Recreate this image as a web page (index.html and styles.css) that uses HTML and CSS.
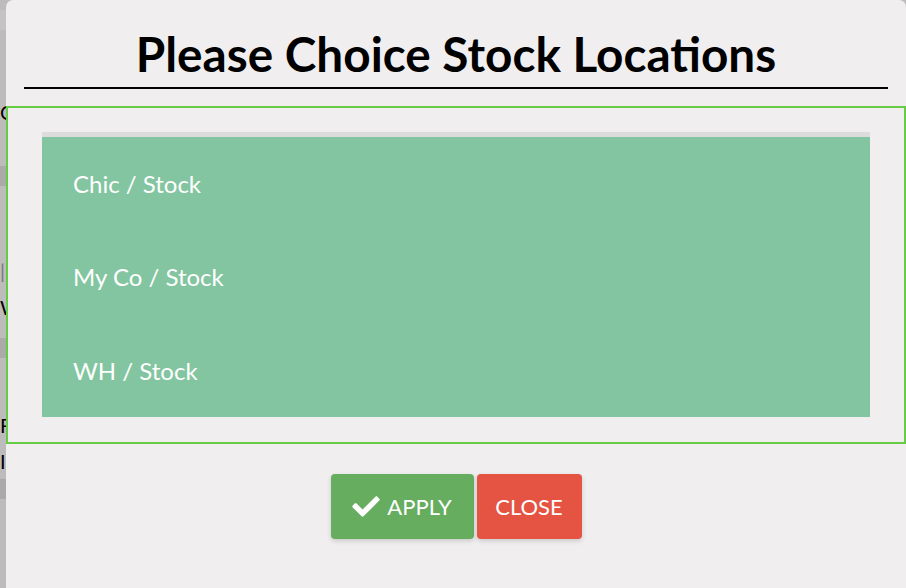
FILE: index.html
```html
<!DOCTYPE html>
<html>
<head>
<meta charset="utf-8">
<link rel="stylesheet" href="styles.css">
</head>
<body>
<div class="page">
  <div class="band band-1"></div>
  <div class="spacer s-1"></div>
  <div class="label">Customer</div>
  <div class="band band-2"></div>
  <div class="spacer s-2"></div>
  <div class="label faint">|</div>
  <div class="label">Warehouse</div>
  <div class="band band-3"></div>
  <div class="spacer s-3"></div>
  <div class="label">From</div>
  <div class="label">Into</div>
  <div class="band band-4"></div>
</div>
<div class="modal">
  <h1 class="title">Please Choice Stock Locations</h1>
  <div class="rule"></div>
  <div class="frame">
    <ul class="locations">
      <li class="loc">Chic / Stock</li>
      <li class="loc">My Co / Stock</li>
      <li class="loc">WH / Stock</li>
    </ul>
  </div>
  <div class="actions">
    <button class="btn btn-apply"><svg class="check" viewBox="0 0 512 430"><path fill="#fff" transform="translate(0,-40)" d="M173.898 439.404l-166.4-166.4c-9.997-9.997-9.997-26.206 0-36.204l36.203-36.204c9.997-9.998 26.207-9.998 36.204 0L192 312.690 432.095 72.596c9.997-9.997 26.207-9.997 36.204 0l36.203 36.204c9.997 9.997 9.997 26.206 0 36.204l-294.4 294.401c-9.998 9.997-26.207 9.997-36.204-.001z"/></svg>APPLY</button>
    <button class="btn btn-close">CLOSE</button>
  </div>
</div>
</body>
</html>
```
FILE: styles.css
```css
html, body {
  margin: 0;
  padding: 0;
  width: 906px;
  height: 588px;
  overflow: hidden;
  background: #bdbdbd;
  font-family: Lato, "Open Sans", sans-serif;
}
.page {
  display: flex;
  flex-direction: column;
  background: #bcbcbc;
  height: 588px;
}
.page > div { flex: none; }
.band { height: 20px; background: #aaaaaa; }
.band-1 { margin-top: 10px; background: #c4c4c4; }
.band-2 { margin-top: 36px; }
.band-3 { margin-top: 13px; }
.band-4 { margin-top: 0; }
.s-1 { height: 64px; }
.s-2 { height: 67px; }
.s-3 { height: 49px; }
.label { height: 36px; font-size: 20px; line-height: 36px; color: #000; }
.faint { color: #777; }
.modal {
  position: absolute;
  left: 6px;
  top: 0;
  width: 900px;
  height: 600px;
  background: #f0eeef;
  border-radius: 7px;
}
.title {
  margin: 0;
  padding-top: 26px;
  height: 65px;
  box-sizing: border-box;
  text-align: center;
  font-family: Lato, sans-serif;
  font-weight: 700;
  font-size: 47.7px;
  line-height: 56px;
  color: #000;
  white-space: nowrap;
}
.rule {
  margin: 22px 18px 0;
  height: 2px;
  background: #000;
}
.frame {
  margin-top: 17px;
  border: 2px solid #66cc44;
  padding: 24px 34px 25px 34px;
  height: 338px;
  box-sizing: border-box;
}
.locations {
  list-style: none;
  margin: 0;
  padding: 0;
  border-top: 5px solid #dddcdc;
  background: #83c5a0;
  height: 285px;
  box-sizing: border-box;
}
.loc {
  height: 93.3px;
  display: flex;
  align-items: center;
  padding-left: 31px;
  color: #fff;
  font-size: 24px;
}
.actions {
  display: flex;
  justify-content: center;
  gap: 3px;
  margin-top: 30px;
}
.btn {
  border: none;
  border-radius: 4px;
  height: 65px;
  color: #fff;
  font-family: Lato, sans-serif;
  font-size: 22px;
  display: flex;
  align-items: center;
  justify-content: center;
  box-shadow: 0 2px 5px rgba(0,0,0,0.16);
  padding: 0;
}
.btn-apply { width: 143px; background: #66ad5f; }
.btn-close { width: 105px; background: #e55342; }
.check { width: 28px; height: 23px; margin-right: 7px; }
```
